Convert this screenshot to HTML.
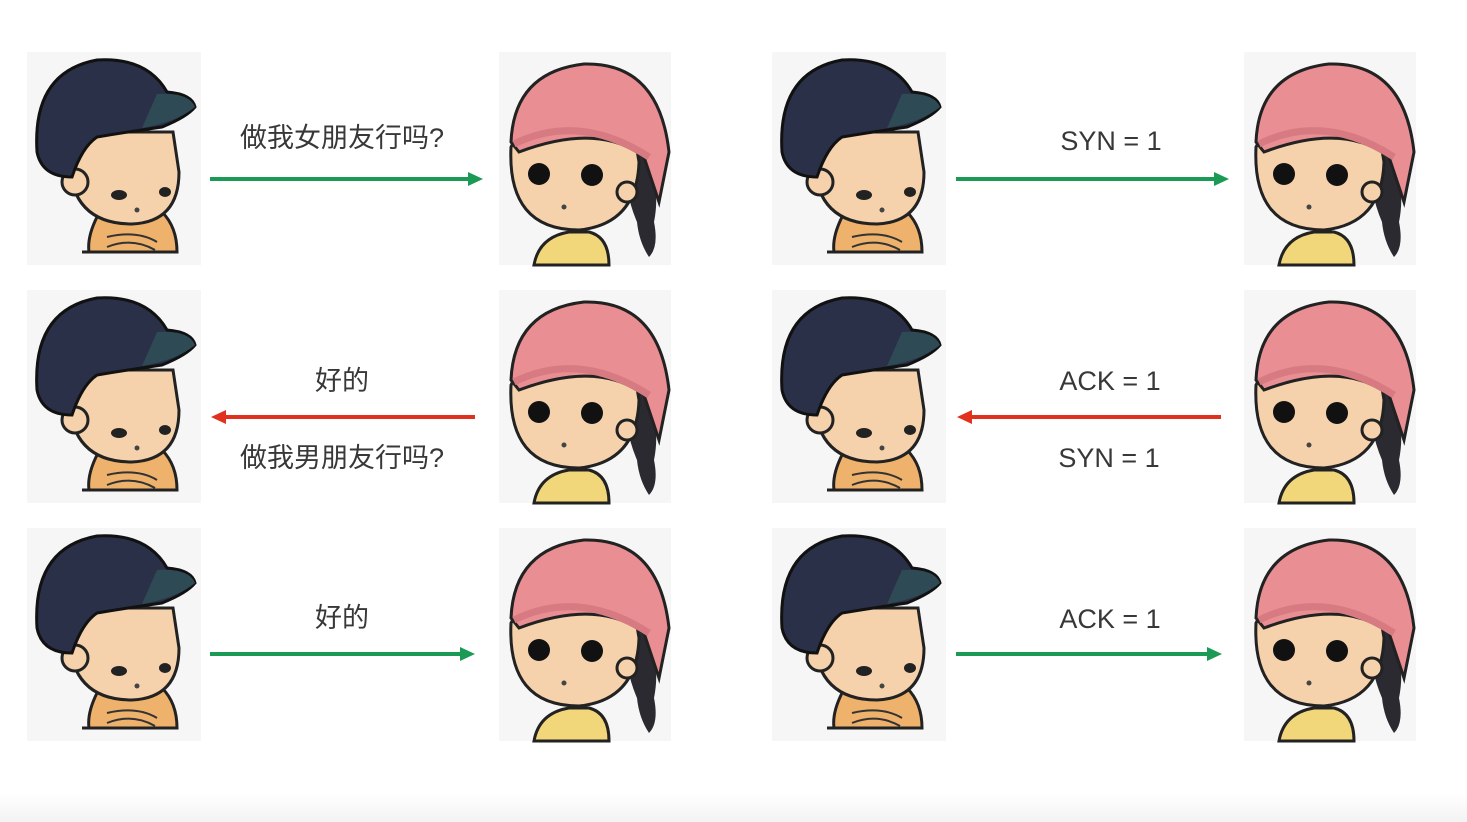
<!DOCTYPE html>
<html><head><meta charset="utf-8"><style>
html,body{margin:0;padding:0;background:#fff;width:1467px;height:822px;overflow:hidden}
svg text{font-family:"Liberation Sans","Noto Sans CJK SC",sans-serif;fill:#383838;font-size:27px;text-anchor:middle}
</style></head><body>
<svg width="1467" height="822" viewBox="0 0 1467 822" xmlns="http://www.w3.org/2000/svg">
<defs>
<linearGradient id="bg" x1="0" y1="0" x2="0" y2="1"><stop offset="0.965" stop-color="#fff"/><stop offset="1" stop-color="#f3f3f3"/></linearGradient>
<g id="boy">
<rect width="174" height="213" fill="#f6f6f6"/>
<path d="M70 165 Q60 185 62 200 L150 200 Q150 175 135 160 Z" fill="#eeb26c" stroke="#222" stroke-width="3"/>
<path d="M80 185 Q110 178 130 190 M80 195 Q105 185 128 198" stroke="#333" stroke-width="2" fill="none"/>
<line x1="55" y1="200" x2="150" y2="200" stroke="#222" stroke-width="3"/>
<path d="M42 110 Q45 172 105 172 Q152 170 152 120 L146 80 L55 80 Z" fill="#f5d2ac" stroke="#222" stroke-width="3"/>
<circle cx="48" cy="130" r="13" fill="#f5d2ac" stroke="#222" stroke-width="3"/>
<path d="M10 100 Q5 20 70 8 Q120 5 140 40 Q165 42 168 55 Q160 65 135 75 Q100 80 70 85 Q55 95 45 125 Q15 125 10 100 Z" fill="#2b3049" stroke="#111" stroke-width="3"/>
<path d="M130 42 Q162 40 168 55 Q150 70 115 76 Z" fill="#2e4a55"/>
<ellipse cx="92" cy="143" rx="8" ry="5" fill="#222"/>
<ellipse cx="138" cy="140" rx="6" ry="5" fill="#222"/>
<circle cx="110" cy="158" r="2.5" fill="#444"/>
</g>
<g id="girl">
<rect width="172" height="213" fill="#f6f6f6"/>
<path d="M35 213 Q40 185 70 180 L90 180 Q110 185 110 213 Z" fill="#f2d77a" stroke="#222" stroke-width="3"/>
<path d="M130 90 Q165 120 155 170 Q160 195 150 205 Q140 190 138 170 Q125 140 125 100 Z" fill="#2a2a30"/>
<path d="M12 95 Q8 178 80 178 Q138 172 140 110 L135 80 L20 80 Z" fill="#f5d2ac" stroke="#222" stroke-width="3"/>
<path d="M12 90 Q15 20 85 12 Q160 10 170 100 L160 150 Q150 120 145 105 Q100 70 20 100 Z" fill="#e98e92" stroke="#222" stroke-width="3"/>
<path d="M15 92 Q80 60 150 105" stroke="#d77a82" stroke-width="7" fill="none"/>
<circle cx="40" cy="122" r="11" fill="#111"/>
<circle cx="93" cy="123" r="11" fill="#111"/>
<circle cx="65" cy="155" r="2.5" fill="#444"/>
<circle cx="128" cy="140" r="10" fill="#f5d2ac" stroke="#222" stroke-width="3"/>
</g>
</defs>
<rect width="1467" height="822" fill="url(#bg)"/>
<use href="#boy" x="27" y="52"/><use href="#girl" x="499" y="52"/>
<use href="#boy" x="27" y="290"/><use href="#girl" x="499" y="290"/>
<use href="#boy" x="27" y="528"/><use href="#girl" x="499" y="528"/>
<use href="#boy" x="772" y="52"/><use href="#girl" x="1244" y="52"/>
<use href="#boy" x="772" y="290"/><use href="#girl" x="1244" y="290"/>
<use href="#boy" x="772" y="528"/><use href="#girl" x="1244" y="528"/>
<g stroke-width="4">
<line x1="210" y1="179" x2="472" y2="179" stroke="#1a9a55"/><path d="M483 179 L468 172 L468 186 Z" fill="#1a9a55"/>
<line x1="222" y1="417" x2="475" y2="417" stroke="#e0301e"/><path d="M211 417 L226 410 L226 424 Z" fill="#e0301e"/>
<line x1="210" y1="654" x2="464" y2="654" stroke="#1a9a55"/><path d="M475 654 L460 647 L460 661 Z" fill="#1a9a55"/>
<line x1="956" y1="179" x2="1218" y2="179" stroke="#1a9a55"/><path d="M1229 179 L1214 172 L1214 186 Z" fill="#1a9a55"/>
<line x1="968" y1="417" x2="1221" y2="417" stroke="#e0301e"/><path d="M957 417 L972 410 L972 424 Z" fill="#e0301e"/>
<line x1="956" y1="654" x2="1211" y2="654" stroke="#1a9a55"/><path d="M1222 654 L1207 647 L1207 661 Z" fill="#1a9a55"/>
</g>
<text x="342" y="147">做我女朋友行吗?</text>
<text x="342" y="390">好的</text>
<text x="342" y="467">做我男朋友行吗?</text>
<text x="342" y="627">好的</text>
<text x="1111" y="150">SYN = 1</text>
<text x="1110" y="390">ACK = 1</text>
<text x="1109" y="467">SYN = 1</text>
<text x="1110" y="628">ACK = 1</text>
</svg>
</body></html>
